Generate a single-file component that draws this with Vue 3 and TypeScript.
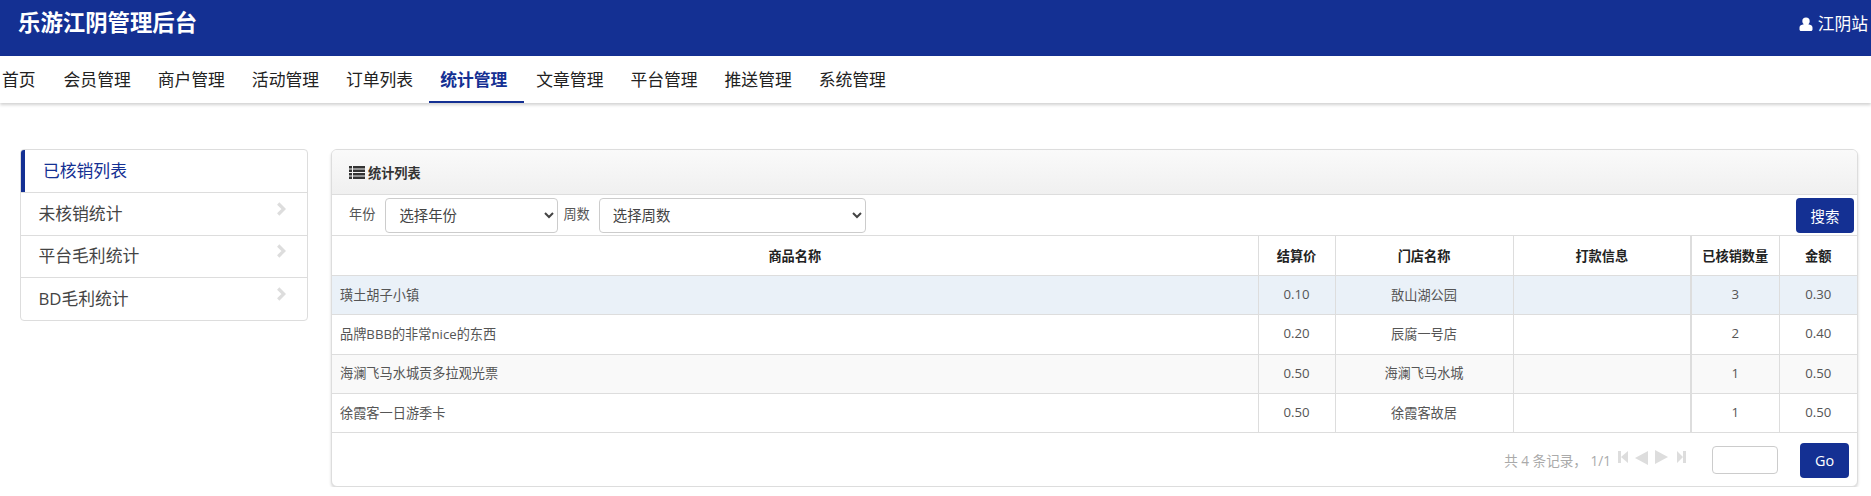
<script setup lang="ts">
const navItems: string[] = ['首页', '会员管理', '商户管理', '活动管理', '订单列表', '统计管理', '文章管理', '平台管理', '推送管理', '系统管理']
const sideItems: string[] = ['未核销统计', '平台毛利统计', 'BD毛利统计']
interface Row { name: string; price: string; store: string; count: string; amount: string }
const rows: Row[] = [
  { name: '璜土胡子小镇', price: '0.10', store: '敔山湖公园', count: '3', amount: '0.30' },
  { name: '品牌BBB的非常nice的东西', price: '0.20', store: '辰腐一号店', count: '2', amount: '0.40' },
  { name: '海澜飞马水城贡多拉观光票', price: '0.50', store: '海澜飞马水城', count: '1', amount: '0.50' },
  { name: '徐霞客一日游季卡', price: '0.50', store: '徐霞客故居', count: '1', amount: '0.50' }
]
</script>

<template>
  <div class="page">
    <header class="topbar">
      <h1 class="brand">乐游江阴管理后台</h1>
      <div class="user">
        <svg class="user-icon" viewBox="0 0 14 16" width="14" height="16"><path fill="#fff" d="M7 1.500a3.700 3.700 0 0 1 3.700 3.700c0 1.300-.6 2.400-1.500 3.100 2.500.4 4.300 1.300 4.300 3.200v1.900c0 .8-.7 1.600-1.500 1.600H2c-.8 0-1.500-.8-1.500-1.600v-1.900c0-1.900 1.800-2.800 4.300-3.200a3.900 3.900 0 0 1-1.500-3.100A3.700 3.700 0 0 1 7 1.500z"/></svg>
        <span>江阴站</span>
      </div>
    </header>
    <nav class="nav">
      <a v-for="item in navItems" :key="item" class="nav-item" :class="{ active: item === '统计管理' }">{{ item }}</a>
    </nav>
    <main class="main">
      <aside class="side">
        <div class="side-item side-active">已核销列表</div>
        <div v-for="item in sideItems" :key="item" class="side-item">
          <span>{{ item }}</span>
          <svg class="chev" viewBox="0 0 10 14" width="10" height="14"><path fill="none" stroke="#ddd" stroke-width="3.200" d="M2.200 1.500 7.800 7 2.200 12.500"/></svg>
        </div>
      </aside>
      <section class="panel">
        <div class="panel-head">
          <svg class="list-icon" viewBox="0 0 16 13" width="16" height="13"><path fill="#333" d="M0 0h3v2.500H0zM4 0h12v2.500H4zM0 3.500h3V6H0zM4 3.500h12V6H4zM0 7h3v2.500H0zM4 7h12v2.500H4zM0 10.500h3V13H0zM4 10.500h12V13H4z"/></svg>
          <span>统计列表</span>
        </div>
        <div class="filters">
          <label class="lbl lbl-year">年份</label>
          <select class="sel sel-year"><option>选择年份</option></select>
          <label class="lbl lbl-week">周数</label>
          <select class="sel sel-week"><option>选择周数</option></select>
          <button class="search">搜索</button>
        </div>
        <table class="tbl">
          <colgroup>
            <col style="width:926px" />
            <col style="width:77px" />
            <col style="width:178px" />
            <col style="width:178px" />
            <col style="width:88px" />
            <col />
          </colgroup>
          <thead>
            <tr>
              <th>商品名称</th><th>结算价</th><th>门店名称</th><th>打款信息</th><th class="thick">已核销数量</th><th>金额</th>
            </tr>
          </thead>
          <tbody>
            <tr v-for="(r, i) in rows" :key="r.name" :class="'row' + i">
              <td class="name">{{ r.name }}</td>
              <td>{{ r.price }}</td>
              <td>{{ r.store }}</td>
              <td></td>
              <td class="thick">{{ r.count }}</td>
              <td>{{ r.amount }}</td>
            </tr>
          </tbody>
        </table>
        <div class="pager">
          <span class="count">共 4 条记录， 1/1</span>
          <svg class="pg" viewBox="0 0 70 17" width="70" height="17">
            <path fill="#ddd" d="M1 2h3v12H1zM11 2v12L4 8zM31 2v14L18 9zM38 1l13 7-13 7zM60 2l6 6-6 6zM66 2h3v12h-3z"/>
          </svg>
          <input class="go-input" type="text" />
          <button class="go">Go</button>
        </div>
      </section>
    </main>
  </div>
</template>

<style>
html, body { margin: 0; background: #fff; }
</style>

<style scoped>
.page { font-family: "Open Sans", "Noto Sans CJK SC", sans-serif; color: #333; width: 1871px; }
.topbar { height: 56px; background: #143093; color: #fff; display: flex; justify-content: space-between; align-items: center; padding: 0 3px 10px 18px; box-sizing: border-box; }
.brand { margin: 0 0 1px; font-size: 22.400px; font-weight: 700; line-height: 26px; }
.user { display: flex; align-items: center; gap: 5px; font-size: 16.800px; line-height: 24px; margin-top: 2px; }
.user-icon { display: block; }
.nav { height: 47px; display: flex; background: #fff; box-shadow: 0 2px 3px rgba(0, 0, 0, .18); padding-left: 2px; box-sizing: border-box; position: relative; }
.nav-item { font-size: 16.800px; line-height: 48px; padding: 0 13.500px; color: #222; box-sizing: border-box; height: 47px; white-space: nowrap; }
.nav-item:first-child { padding: 0 14.500px 0 0; }
.nav-item.active { color: #143093; font-weight: 700; border-bottom: 2px solid #143093; margin: 0 -1px 0 2px; padding: 0 16.500px 0 11.500px; }
.main { display: grid; grid-template-columns: 288px 1fr; gap: 23px; padding: 46px 13px 0 20px; align-items: start; }
.side { border: 1px solid #ddd; border-radius: 4px; box-sizing: border-box; overflow: hidden; }
.side-item { height: 42.500px; box-sizing: border-box; display: flex; align-items: center; justify-content: space-between; font-size: 16.800px; padding: 0 21px 2px 17.500px; border-top: 1px solid #ddd; color: #444; }
.side-item:first-child { border-top: 0; }
.side-active { color: #143093; border-left: 5px solid #143093; margin-left: -1px; padding-left: 18px; height: 42px; }
.chev { position: relative; top: -4px; }
.panel { border: 1px solid #ddd; border-radius: 6px; box-shadow: 0 2px 3px rgba(0, 0, 0, .16); box-sizing: border-box; height: 338px; overflow: hidden; background: #fff; }
.panel-head { height: 45px; box-sizing: border-box; background: linear-gradient(#fafafa, #f0f0f0); border-bottom: 1px solid #ddd; display: flex; align-items: center; padding-left: 17px; gap: 3px; font-size: 13.200px; font-weight: 700; color: #333; }
.filters { height: 41px; box-sizing: border-box; display: flex; align-items: center; font-size: 13.200px; color: #555; padding: 0 3px 0 17px; border-bottom: 1px solid #ddd; }
.lbl { line-height: 18px; position: relative; top: -1px; }
.lbl-year { margin-right: 10px; }
.lbl-week { margin: 0 9px 0 5px; }
.sel { height: 35px; box-sizing: border-box; background: #fff; border: 1px solid #ccc; border-radius: 4px; font-family: inherit; font-size: 14.400px; color: #444; padding: 0 9px; }
.sel-year { width: 173px; }
.sel-week { width: 267px; }
.search { margin-left: auto; width: 58px; height: 35px; border: 0; border-radius: 4px; background: #143093; color: #fff; font-family: inherit; font-size: 14.400px; padding: 0; }
.tbl { width: 100%; table-layout: fixed; border-collapse: collapse; font-size: 13.200px; color: #555; }
.tbl th, .tbl td { border: 1px solid #ddd; text-align: center; padding: 0 8px; font-weight: 400; }
.tbl tr > :first-child { border-left: 0; }
.tbl tr > :last-child { border-right: 0; }
.tbl thead tr:first-child th { border-top: 0; }
.tbl th { height: 39px; font-weight: 700; color: #222; }
.tbl td { height: 36.300px; padding-bottom: 2px; }
.tbl td.name { text-align: left; }
.tbl .thick { border-left: 2px solid #ddd; }
.row0 td { background: #eaf1f8; }
.row2 td { background: #f9f9f9; }
.pager { display: flex; align-items: center; height: 54px; box-sizing: border-box; padding: 0 8px 0 0; font-size: 13.600px; color: #aaa; justify-content: flex-end; }
.count { white-space: nowrap; }
.pg { margin: -5px 0 0 6px; }
.go-input { width: 66px; height: 28px; box-sizing: border-box; border: 1px solid #ccc; border-radius: 4px; margin-left: 25px; margin-right: 22px; background: #fff; padding: 0; }
.go { width: 49px; height: 35px; border: 0; border-radius: 4px; background: #143093; color: #fff; font-family: inherit; font-size: 14.400px; padding: 0; }
</style>
